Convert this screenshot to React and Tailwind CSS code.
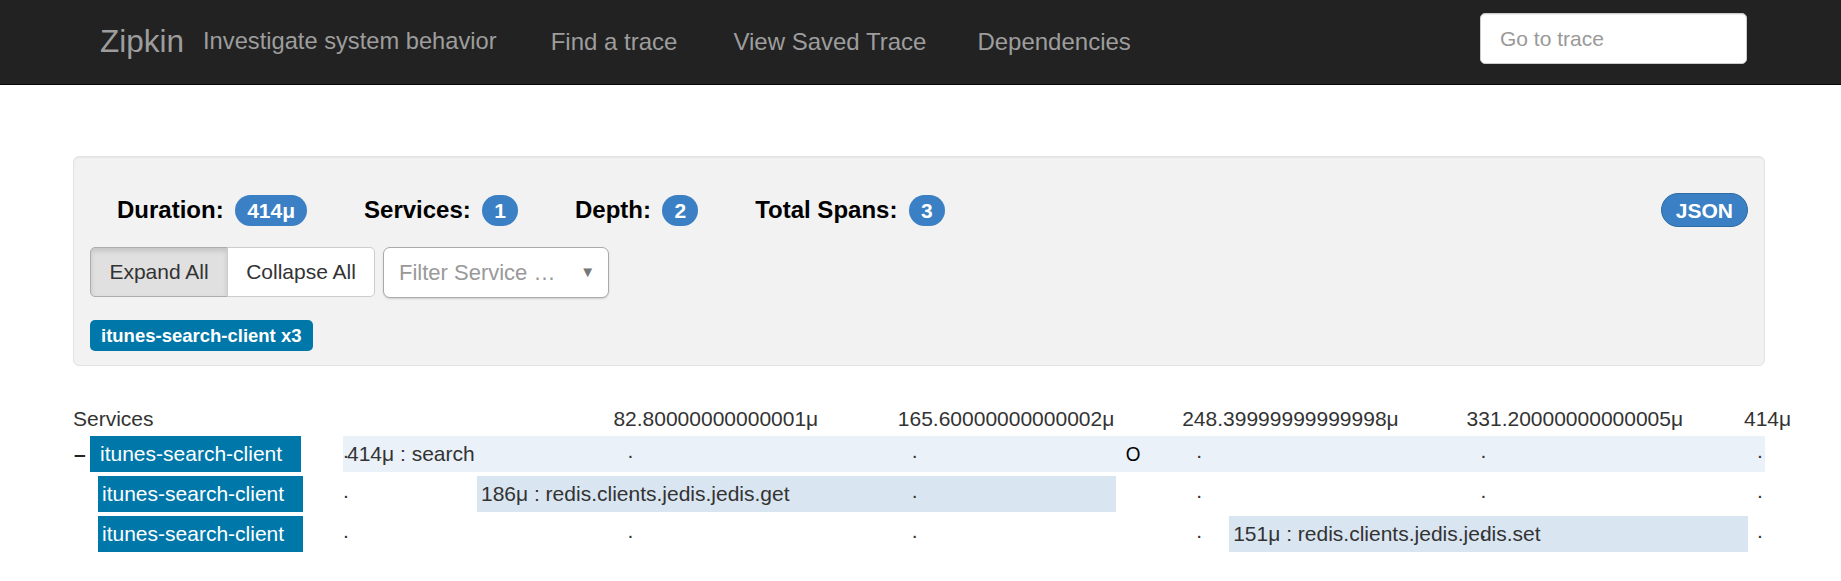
import React from "react";

const TOTAL = 414;

const spans = [
  { id: "a1", service: "itunes-search-client", name: "search", start: 0, duration: 414, depth: 0 },
  { id: "b2", service: "itunes-search-client", name: "redis.clients.jedis.jedis.get", start: 39, duration: 186, depth: 1 },
  { id: "c3", service: "itunes-search-client", name: "redis.clients.jedis.jedis.set", start: 258, duration: 151, depth: 1 },
];

// tick labels keep the raw float output, as the original page prints them
const ticks = [0.2, 0.4, 0.6, 0.8, 1].map((p) => ({ p, label: `${TOTAL * p}μ` }));
const markers = [0, 0.2, 0.4, 0.6, 0.8, 1];

const Stat = ({ label, value }) => (
  <div className="flex items-center gap-[11.5px]">
    <span className="text-[24px] font-bold text-black">{label}</span>
    <span className="h-[31px] px-[12px] rounded-full bg-[#3b7fc4] text-white text-[21px] font-bold flex items-center leading-none">
      {value}
    </span>
  </div>
);

const SpanRow = ({ span }) => {
  const left = (span.start / TOTAL) * 100;
  const width = (span.duration / TOTAL) * 100;
  const root = span.depth === 0;

  return (
    <div className="flex h-[36px]">
      <div className="w-[270px] shrink-0 flex items-stretch">
        {root ? (
          <span className="w-[17px] pl-px text-[21px] font-bold text-[#222] flex items-center">–</span>
        ) : (
          <span className="w-[25px]" />
        )}
        <div
          className={`flex items-center bg-[#0077a9] text-white text-[21px] ${
            root ? "w-[211px] pl-[10px]" : "w-[205px] pl-[4px]"
          }`}
        >
          {span.service}
        </div>
      </div>

      <div className="relative flex-1 text-[#333] text-[21px]">
        <div
          className={`absolute top-0 h-full flex items-center pl-[4px] whitespace-nowrap ${
            root ? "bg-[#eaf1f8]" : "bg-[#d9e6f1]"
          }`}
          style={{ left: `${left}%`, width: `${width}%` }}
        >
          {span.duration}μ : {span.name}
        </div>

        {markers.map((m) => (
          <span
            key={m}
            className="absolute top-0 h-full flex items-center leading-none -translate-y-[4px] z-10"
            style={{ left: m === 1 ? "calc(100% - 8px)" : `${m * 100}%` }}
          >
            .
          </span>
        ))}

        {root && (
          <span className="absolute top-0 left-[782px] h-full flex items-center text-black text-[21px] scale-x-90 z-10">O</span>
        )}
      </div>
    </div>
  );
};

export default function App() {
  return (
    <div className="min-h-screen bg-white font-['Liberation_Sans',Arial,sans-serif]">
      {/* Navbar */}
      <nav className="h-[85px] bg-[#222] border-b border-[#080808] flex items-center pl-[100px] pr-[94px]">
        <a className="text-[31.5px] text-[#9d9d9d]">Zipkin</a>
        <span className="ml-[19px] text-[23.7px] text-[#9d9d9d]">Investigate system behavior</span>
        <ul className="ml-[54px] flex text-[24px] text-[#9d9d9d]">
          <li>Find a trace</li>
          <li className="ml-[56px]">View Saved Trace</li>
          <li className="ml-[51px]">Dependencies</li>
        </ul>
        <div className="ml-auto self-start mt-[13px]">
          <input
            type="text"
            placeholder="Go to trace"
            className="w-[267px] h-[51px] rounded-[5px] bg-white border border-[#ccc] pl-[19px] text-[21px] text-[#555] placeholder-[#999] shadow-[inset_0_1px_1px_rgba(0,0,0,0.075)] outline-none"
          />
        </div>
      </nav>

      <div className="ml-[73px] w-[1692px]">
        {/* Trace summary */}
        <div className="mt-[71px] bg-[#f2f2f2] border border-[#e3e3e3] rounded-[6px] shadow-[inset_0_1px_1px_rgba(0,0,0,0.05)] pt-[36px] pb-[14px] px-[16px]">
          <div className="flex items-center h-[34px]">
            <div className="flex items-center gap-[57px] pl-[27px]">
              <Stat label="Duration:" value="414μ" />
              <Stat label="Services:" value="1" />
              <Stat label="Depth:" value="2" />
              <Stat label="Total Spans:" value="3" />
            </div>
            <button className="ml-auto h-[34px] px-[14px] rounded-full bg-[#3b7fc4] border border-[#2e6da4] text-white text-[21px] font-bold leading-none">
              JSON
            </button>
          </div>

          <div className="mt-[20px] flex items-start">
            <div className="flex">
              <button className="h-[50px] w-[138px] rounded-l-[5px] bg-[#e0e0e0] border border-[#adadad] text-[21px] text-[#333] shadow-[inset_0_3px_5px_rgba(0,0,0,0.125)]">
                Expand All
              </button>
              <button className="h-[50px] w-[148px] -ml-px rounded-r-[5px] bg-white border border-[#ccc] text-[21px] text-[#333]">
                Collapse All
              </button>
            </div>
            <div className="ml-[8px] h-[51px] w-[226px] rounded-[7px] bg-white border border-[#aaa] shadow-[0_1px_2px_rgba(0,0,0,0.15)] flex items-center pl-[15px] pr-[13px]">
              <span className="text-[22px] text-[#999] whitespace-nowrap">Filter Service …</span>
              <span className="ml-auto text-[15px] text-[#777]">▼</span>
            </div>
          </div>

          <div className="mt-[22px] flex">
            <span className="h-[31px] px-[11px] rounded-[5px] bg-[#0077a9] text-white text-[18.5px] font-bold flex items-center">
              itunes-search-client x3
            </span>
          </div>
        </div>

        {/* Timeline header */}
        <div className="mt-[38px] flex h-[30px] text-[21px] text-[#333] leading-[30px]">
          <div className="w-[270px] shrink-0">Services</div>
          <div className="relative flex-1">
            {ticks.map((t) => (
              <span
                key={t.p}
                className="absolute top-0 whitespace-nowrap"
                style={{ left: t.p === 1 ? "calc(100% - 21px)" : `calc(${t.p * 100}% - 14px)` }}
              >
                {t.label}
              </span>
            ))}
          </div>
        </div>

        {/* Span rows */}
        <div className="mt-[2px] flex flex-col gap-[4px]">
          {spans.map((s) => (
            <SpanRow key={s.id} span={s} />
          ))}
        </div>
      </div>
    </div>
  );
}
